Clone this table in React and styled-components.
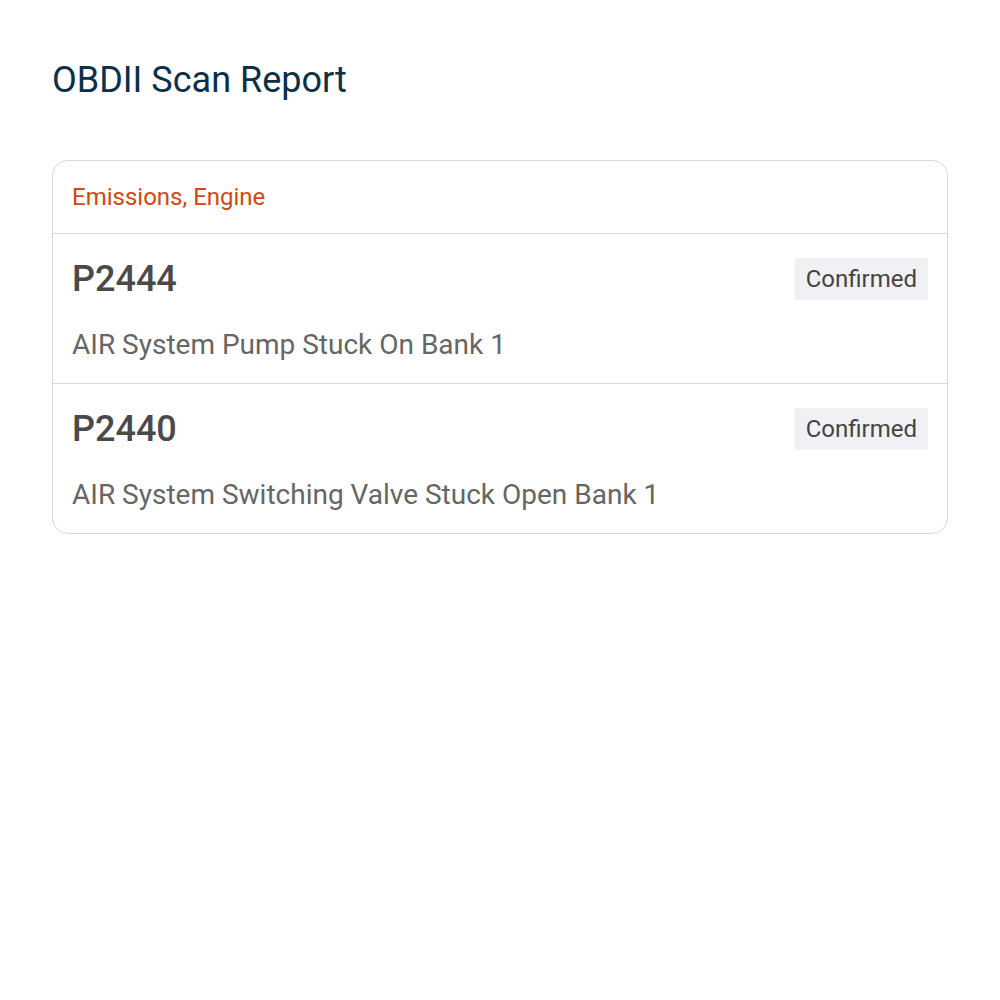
import React from "react";
import styled, { createGlobalStyle } from "styled-components";

const GlobalStyle = createGlobalStyle`
  body {
    margin: 0;
    background: #ffffff;
    font-family: Roboto, "Liberation Sans", sans-serif;
  }
`;

const Page = styled.div`
  padding: 52px 52px;
`;

const Title = styled.h1`
  margin: 4px 0 56px 0;
  font-size: 36px;
  font-weight: 400;
  line-height: 48px;
  color: #0b3049;
`;

const Card = styled.div`
  border: 1px solid #d8d8d8;
  border-radius: 16px;
  overflow: hidden;
`;

const CardHeader = styled.div`
  display: flex;
  align-items: center;
  height: 72px;
  padding: 0 19px;
  border-bottom: 1px solid #d8d8d8;
  font-size: 24px;
  color: #d4470f;
`;

const Row = styled.div`
  padding: 24px 19px 23px;
  border-bottom: ${(p) => (p.last ? "none" : "1px solid #d8d8d8")};
`;

const TopLine = styled.div`
  display: flex;
  align-items: center;
  justify-content: space-between;
  height: 42px;
`;

const Code = styled.span`
  font-size: 36px;
  font-weight: 500;
  color: #4a4a4a;
`;

const Badge = styled.span`
  background: #f1f1f5;
  color: #444444;
  font-size: 24px;
  line-height: 42px;
  padding: 0 11px;
`;

const Description = styled.div`
  margin-top: 30px;
  font-size: 28px;
  line-height: 30px;
  color: #666666;
`;

const codes = [
  { code: "P2444", status: "Confirmed", text: "AIR System Pump Stuck On Bank 1" },
  { code: "P2440", status: "Confirmed", text: "AIR System Switching Valve Stuck Open Bank 1" },
];

export default function App() {
  return (
    <>
      <GlobalStyle />
      <Page>
        <Title>OBDII Scan Report</Title>
        <Card>
          <CardHeader>Emissions, Engine</CardHeader>
          {codes.map((c, i) => (
            <Row key={c.code} last={i === codes.length - 1}>
              <TopLine>
                <Code>{c.code}</Code>
                <Badge>{c.status}</Badge>
              </TopLine>
              <Description>{c.text}</Description>
            </Row>
          ))}
        </Card>
      </Page>
    </>
  );
}
